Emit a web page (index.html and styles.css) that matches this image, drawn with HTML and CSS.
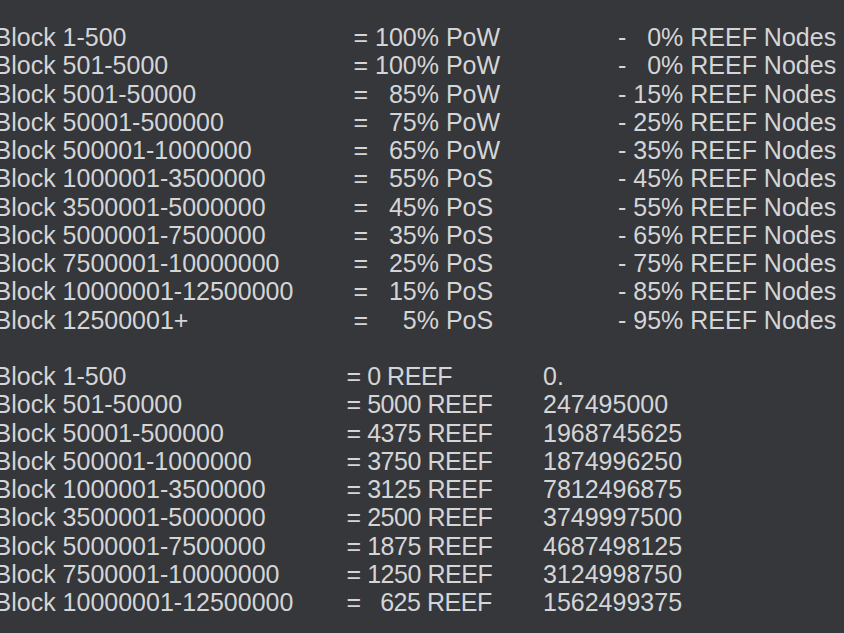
FILE: index.html
```html
<!DOCTYPE html>
<html>
<head>
<meta charset="utf-8">
<link rel="stylesheet" href="styles.css">
</head>
<body>
<div class="sheet">
  <div class="table split">
    <span>Block 1-500</span><span>= 100% PoW</span><span>-   0% REEF Nodes</span>
    <span>Block 501-5000</span><span>= 100% PoW</span><span>-   0% REEF Nodes</span>
    <span>Block 5001-50000</span><span>=   85% PoW</span><span>- 15% REEF Nodes</span>
    <span>Block 50001-500000</span><span>=   75% PoW</span><span>- 25% REEF Nodes</span>
    <span>Block 500001-1000000</span><span>=   65% PoW</span><span>- 35% REEF Nodes</span>
    <span>Block 1000001-3500000</span><span>=   55% PoS</span><span>- 45% REEF Nodes</span>
    <span>Block 3500001-5000000</span><span>=   45% PoS</span><span>- 55% REEF Nodes</span>
    <span>Block 5000001-7500000</span><span>=   35% PoS</span><span>- 65% REEF Nodes</span>
    <span>Block 7500001-10000000</span><span>=   25% PoS</span><span>- 75% REEF Nodes</span>
    <span>Block 10000001-12500000</span><span>=   15% PoS</span><span>- 85% REEF Nodes</span>
    <span>Block 12500001+</span><span>=     5% PoS</span><span>- 95% REEF Nodes</span>
  </div>
  <div class="table reward">
    <span>Block 1-500</span><span class="amt">= 0 REEF</span><span>0.</span>
    <span>Block 501-50000</span><span class="amt">= 5000 REEF</span><span>247495000</span>
    <span>Block 50001-500000</span><span class="amt">= 4375 REEF</span><span>1968745625</span>
    <span>Block 500001-1000000</span><span class="amt">= 3750 REEF</span><span>1874996250</span>
    <span>Block 1000001-3500000</span><span class="amt">= 3125 REEF</span><span>7812496875</span>
    <span>Block 3500001-5000000</span><span class="amt">= 2500 REEF</span><span>3749997500</span>
    <span>Block 5000001-7500000</span><span class="amt">= 1875 REEF</span><span>4687498125</span>
    <span>Block 7500001-10000000</span><span class="amt">= 1250 REEF</span><span>3124998750</span>
    <span>Block 10000001-12500000</span><span class="amt">=   625 REEF</span><span>1562499375</span>
  </div>
</div>
</body>
</html>
```

FILE: styles.css
```css
html, body {
  margin: 0;
  padding: 0;
  background: #36373a;
}
body {
  width: 844px;
  height: 633px;
  overflow: hidden;
}
.sheet {
  margin-left: -5.5px;
  padding-top: 23px;
  font-family: "Liberation Sans", Arial, Helvetica, sans-serif;
  font-size: 25px;
  line-height: 28.25px;
  color: #d4d5d7;
}
.table {
  display: grid;
}
.table span {
  white-space: pre;
}
.split {
  grid-template-columns: 359px 264.5px 1fr;
}
.reward {
  margin-top: 28.25px;
  grid-template-columns: 352px 196.5px 1fr;
}
.reward .amt {
  letter-spacing: -0.45px;
}
```
